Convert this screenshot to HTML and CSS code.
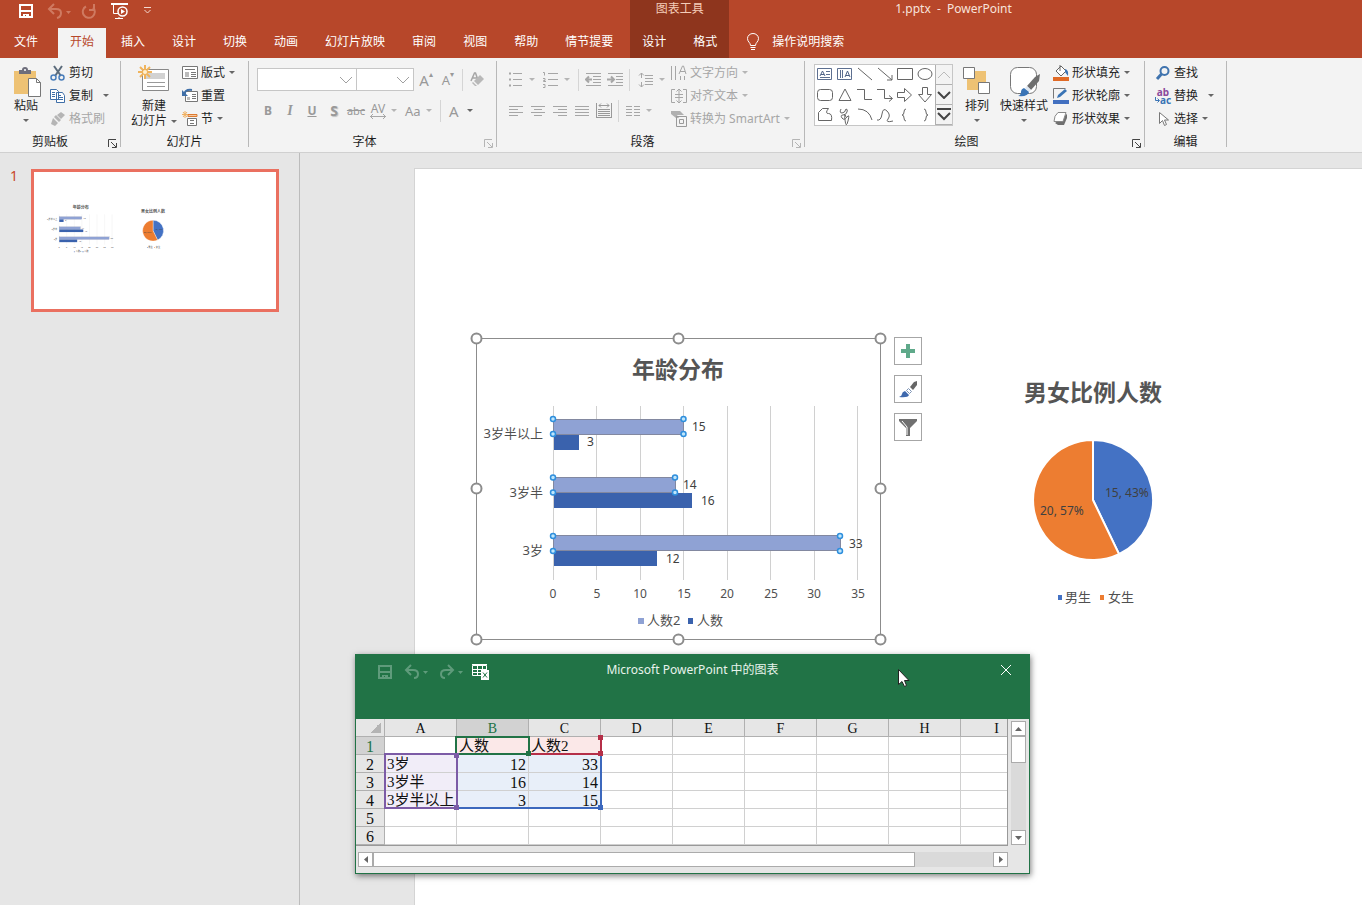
FILE: index.html
```html
<!DOCTYPE html>
<html lang="zh-CN">
<head>
  <meta charset="UTF-8">
  <meta name="viewport" content="width=device-width, initial-scale=1.0">
  <title>1.pptx - PowerPoint</title>
  <link rel="stylesheet" href="styles.css">
</head>
<body>

<!-- Title bar and tabs -->
<header class="header">
  <div class="header-block">
    <div class="title-row quick">
      <button aria-label="保存"><svg width="16" height="16" fill="none" stroke="#fff" stroke-width="2"><path d="M2 2h12v12H2zM3 8h10"/><path d="M5 11h6v3H8v-2H7v2H5z" fill="#fff" stroke="none"/></svg></button>
      <button class="quick-undo" aria-label="撤消"><svg width="24" height="16" fill="none" stroke="#cf7a61" stroke-width="2"><path d="M7 1L2 6l5 5M2 6h7q5 0 5 4t-4 5"/><path d="M19 8h5l-2.500 3z" fill="#cf7a61" stroke="none"/></svg></button>
      <button class="quick-redo" aria-label="恢复"><svg width="16" height="16" fill="none" stroke="#cf7a61" stroke-width="2"><path d="M5 3.500a6 6 0 1 0 7 1M8 7h5V1"/></svg></button>
      <button class="quick-show" aria-label="从头开始"><svg width="18" height="17" fill="none" stroke="#fff" stroke-width="1"><path d="M0 1h17" stroke-width="2"/><path d="M2.500 2v8.500H7M8 14v2M4 15.500h8"/><circle cx="11.500" cy="8.500" r="4.500" stroke-width="1.500"/><path d="M10 6l4 2.500-4 2.500z" fill="#fff" stroke="none"/></svg></button>
      <button class="quick-more" aria-label="自定义快速访问工具栏"><svg width="9" height="16" fill="none" stroke="#f3d9d1"><path d="M1 4.500h7M1.500 7l3 3 3-3"/></svg></button>
    </div>
    <nav class="tabs">
      <a class="tab tab-file" href="#">文件</a>
      <a class="tab active" href="#">开始</a>
      <a class="tab" href="#">插入</a>
      <a class="tab" href="#">设计</a>
      <a class="tab" href="#">切换</a>
      <a class="tab" href="#">动画</a>
      <a class="tab" href="#">幻灯片放映</a>
      <a class="tab" href="#">审阅</a>
      <a class="tab" href="#">视图</a>
      <a class="tab" href="#">帮助</a>
      <a class="tab" href="#">情节提要</a>
    </nav>
  </div>
  <div class="header-block context">
    <div class="title-row">图表工具</div>
    <nav class="tabs">
      <a class="tab" href="#">设计</a>
      <a class="tab" href="#">格式</a>
    </nav>
  </div>
  <div class="header-block search">
    <div class="title-row doc-title">1.pptx&nbsp; -&nbsp; PowerPoint</div>
    <button class="tell-me">
      <svg width="14" height="18" fill="none" stroke="#fff"><path d="M4.500 12.500c0-3-3-3.500-3-7a5.500 5 0 0 1 11 0c0 3.500-3 4-3 7zM4.500 14.500h5M5 16.500h4"/></svg>
      操作说明搜索
    </button>
  </div>
</header>

<!-- Ribbon -->
<div class="ribbon">
  <section class="group group-clipboard">
    <div class="group-body">
      <button class="big">
        <svg width="32" height="32"><path d="M4 5h22v23H4z" fill="#eec274"/><path d="M9 8V4h3q0-3 3-3t3 3h3v4z" fill="#6d6d7b"/><circle cx="15" cy="4" r="1" fill="#fff"/><path d="M18.500 12.500h8l4 4v14h-12z" fill="#fff" stroke="#777"/><path d="M26.500 12.500v4h4" fill="none" stroke="#777"/></svg>
        <span>粘贴</span><i class="caret"></i>
      </button>
      <div class="stack">
        <button class="cmd"><svg width="16" height="16" fill="none" stroke="#5b6b7b" stroke-width="2"><path d="M4 1l7 10M12 1L5 11"/><g stroke="#4a7ebb" stroke-width="1.500"><circle cx="3.500" cy="12.500" r="2.500"/><circle cx="11.500" cy="12.500" r="2.500"/></g></svg>剪切</button>
        <button class="cmd"><svg width="16" height="16" fill="#fff" stroke="#3f6fa8"><path d="M.500 1.500h6l2 2v8h-8zM6.500 4.500h6l2 3v7h-8z"/><path d="M2 4.500h3M2 6.500h3M2 8.500h3M8 7.500h3M8 9.500h5M8 11.500h5"/></svg>复制<i class="caret caret-far"></i></button>
        <button class="cmd off"><svg width="16" height="16" fill="#b5b5b5"><path d="M11 1l4 3-4 4-4-4zM6 4l5 5-2 2-5-5zM3 7l5 5-3 3-4-2z"/></svg>格式刷</button>
      </div>
    </div>
    <div class="group-name">剪贴板</div>
    <button class="launcher" aria-label="剪贴板选项"><svg width="9" height="9" fill="none" stroke="#444"><path d="M.500 8V.500H8M3 3l5 5M8.500 4v4.500H4"/></svg></button>
  </section>

  <section class="group group-slides">
    <div class="group-body">
      <button class="big">
        <svg width="32" height="32"><path d="M4.500 4.500h26v21h-26z" fill="#fff" stroke="#888"/><path d="M8 8h19v6H8z" fill="#d2d2d2"/><path d="M9 17.500h18M9 21.500h18" stroke="#999"/><path d="M7 0v14M0 7h14M2 2l10 10M12 2L2 12" stroke="#f0b45c" stroke-width="2"/><circle cx="7" cy="7" r="2" fill="#fff0d0"/></svg>
        <span>新建</span><span class="with-caret">幻灯片<i class="caret"></i></span>
      </button>
      <div class="stack">
        <button class="cmd"><svg width="16" height="16" fill="#fff" stroke="#777"><path d="M.500 1.500h15v12H.500z"/><path d="M3 4.500h10M9 7.500h5M9 9.500h5M9 11.500h5"/><path d="M3 7h4v5H3z" fill="#bbb" stroke="none"/></svg>版式<i class="caret"></i></button>
        <button class="cmd"><svg width="16" height="16" fill="#fff" stroke="#777"><path d="M3.500 3.500h12v10h-12z"/><path d="M10 6.500h4M10 8.500h4M10 10.500h4"/><path d="M5 9h3v3H5z" fill="#bbb" stroke="none"/><path d="M2 7q1-6 8-5" fill="none" stroke="#3f6fa8" stroke-width="2"/><path d="M0 2v6h6z" fill="#3f6fa8" stroke="none"/></svg>重置</button>
        <button class="cmd"><svg width="16" height="16" fill="#fff" stroke="#777"><path d="M5.500 7.500h9v7h-9zM8 9.500h4M8 12.500h4"/><path d="M6 3.500h9v2H6z" fill="#f6c9a0" stroke="#dd7b31"/><path d="M3 0v7M0 3.500h6M1 1l4 5M5 1L1 6" stroke="#f0b060"/></svg>节<i class="caret"></i></button>
      </div>
    </div>
    <div class="group-name">幻灯片</div>
  </section>

  <section class="group group-font">
    <div class="group-body rows">
      <div class="tools">
        <select class="combo combo-name" aria-label="字体"><option></option></select>
        <select class="combo combo-size" aria-label="字号"><option></option></select>
        <button class="tool big-a">A<sup>▴</sup></button>
        <button class="tool small-a">A<sup>▾</sup></button>
        <i class="sep"></i>
        <button class="tool" aria-label="清除格式"><svg width="16" height="16" fill="#b8b8b8"><path d="M2 9L5.500 1h1L9 8M3.500 6h5" fill="none" stroke="#a6a6a6" stroke-width="1.500"/><path d="M11 3l4 4-6 6-4-4z"/><path d="M4 10l4 4H6l-3-3z"/></svg></button>
      </div>
      <div class="tools">
        <button class="tool"><b>B</b></button>
        <button class="tool italic">I</button>
        <button class="tool under">U</button>
        <button class="tool shadow"><b>S</b></button>
        <button class="tool strike">abc</button>
        <button class="tool drop"><span class="spacing">AV<svg width="16" height="5" fill="none" stroke="#a6a6a6"><path d="M0 2.500h16M3 0L.500 2.500 3 5M13 0l2.500 2.500L13 5"/></svg></span><i class="caret"></i></button>
        <button class="tool drop case">Aa<i class="caret"></i></button>
        <i class="sep"></i>
        <button class="tool drop color">A<i class="caret dark"></i></button>
      </div>
    </div>
    <div class="group-name">字体</div>
    <button class="launcher off" aria-label="字体选项"><svg width="9" height="9" fill="none" stroke="#b5b5b5"><path d="M.500 8V.500H8M3 3l5 5M8.500 4v4.500H4"/></svg></button>
  </section>

  <section class="group group-paragraph">
    <div class="group-body">
      <div class="rows">
        <div class="tools">
          <button class="tool drop" aria-label="项目符号"><svg width="16" height="16" stroke="#a6a6a6"><path d="M5 1.500h9M5 7.500h9M5 13.500h9"/><path d="M1 1.500h2M1 7.500h2M1 13.500h2" stroke-width="2"/></svg><i class="caret"></i></button>
          <button class="tool drop" aria-label="编号"><svg width="16" height="16" fill="none" stroke="#a6a6a6"><path d="M5 1.500h10M5 7.500h10M5 13.500h10M0 .500h1.500v3M0 6.500h2v2H.500v1H3M0 12.500h2v3H0"/></svg><i class="caret"></i></button>
          <i class="sep"></i>
          <button class="tool" aria-label="降低列表级别"><svg width="16" height="16" fill="none" stroke="#a6a6a6"><path d="M1 1.500h15M8 4.500h8M8 7.500h8M8 10.500h8M1 13.500h15"/><path d="M1 7.500h6M4 4.500L1 7.500l3 3" stroke-width="2"/></svg></button>
          <button class="tool" aria-label="提高列表级别"><svg width="16" height="16" fill="none" stroke="#a6a6a6"><path d="M1 1.500h15M9 4.500h7M9 7.500h7M9 10.500h7M1 13.500h15"/><path d="M0 7.500h6M4 4.500l3 3-3 3" stroke-width="2"/></svg></button>
          <i class="sep"></i>
          <button class="tool drop line-spacing" aria-label="行距"><svg width="16" height="16" fill="none" stroke="#a6a6a6"><path d="M7 3.500h8M7 6.500h8M7 9.500h8M7 12.500h8M3.500 1v5M1 3.500L3.500 1 6 3.500M3.500 10v5M1 12.500L3.500 15 6 12.500"/></svg><i class="caret"></i></button>
        </div>
        <div class="tools">
          <button class="tool" aria-label="左对齐"><svg width="16" height="16" stroke="#a6a6a6"><path d="M1 3.500h14M1 6.500h9M1 9.500h14M1 12.500h9"/></svg></button>
          <button class="tool" aria-label="居中"><svg width="16" height="16" stroke="#a6a6a6"><path d="M1 3.500h14M4 6.500h8M1 9.500h14M4 12.500h8"/></svg></button>
          <button class="tool" aria-label="右对齐"><svg width="16" height="16" stroke="#a6a6a6"><path d="M1 3.500h14M6 6.500h9M1 9.500h14M6 12.500h9"/></svg></button>
          <button class="tool" aria-label="两端对齐"><svg width="16" height="16" stroke="#a6a6a6"><path d="M1 3.500h14M1 6.500h14M1 9.500h14M1 12.500h14"/></svg></button>
          <button class="tool" aria-label="分散对齐"><svg width="16" height="16" fill="none" stroke="#999"><path d="M.500 0v15M15.500 0v15M2 6.500h12M2 8.500h12M2 10.500h12M2 12.500h12M0 14.500h16M3 2.500h10M5 .500l-2 2 2 2M11 .500l2 2-2 2"/></svg></button>
          <i class="sep"></i>
          <button class="tool drop" aria-label="分栏"><svg width="16" height="16" stroke="#a6a6a6"><path d="M1 3.500h6M1 6.500h6M1 9.500h6M1 12.500h6M9 3.500h6M9 6.500h6M9 9.500h6M9 12.500h6"/></svg><i class="caret"></i></button>
        </div>
      </div>
      <div class="stack">
        <button class="cmd off"><svg width="16" height="16" fill="none" stroke="#a6a6a6"><path d="M.500 1v14M4.500 1v14M9.500 11v4M13.500 11v4M8 9l3.500-8h1L15 9M9 6.500h5"/></svg>文字方向<i class="caret"></i></button>
        <button class="cmd off"><svg width="16" height="16" fill="none" stroke="#a6a6a6"><path d="M4 1.500H.500v13H4M12 1.500h3.500v13H12M4 6.500h8M4 9.500h8M8 1v14M5.500 3.500L8 1l2.500 2.500M5.500 12.500L8 15l2.500-2.500"/></svg>对齐文本<i class="caret"></i></button>
        <button class="cmd off"><svg width="16" height="16" fill="none" stroke="#999"><path d="M0 0h9l4 4H6l2 3H5L0 3z" fill="#b0b0b0" stroke="none"/><path d="M5.500 5.500h10v10h-10zM8.500 8.500h4v4h-4z"/></svg>转换为 SmartArt<i class="caret"></i></button>
      </div>
    </div>
    <div class="group-name">段落</div>
    <button class="launcher off" aria-label="段落选项"><svg width="9" height="9" fill="none" stroke="#b5b5b5"><path d="M.500 8V.500H8M3 3l5 5M8.500 4v4.500H4"/></svg></button>
  </section>

  <section class="group group-drawing">
    <div class="group-body">
      <div class="gallery">
        <div class="shapes">
          <svg class="shape" viewBox="0 0 20 20"><path d="M2.500 3.500h14v11h-14zM11 6.500h4M11 9.500h4M5 12.500h10" stroke="#5d6f90"/><path d="M5 11l2.500-5L10 11M6 9.500h3" stroke="#4d6185"/></svg>
          <svg class="shape" viewBox="0 0 20 20"><path d="M2.500 3.500h14v11h-14zM5.500 5v8M7.500 5v8" stroke="#5d6f90"/><path d="M10 12l2.500-6L15 12M11 10.500h3" stroke="#4d6185"/></svg>
          <svg class="shape" viewBox="0 0 20 20"><path d="M3 3l14 12"/></svg>
          <svg class="shape" viewBox="0 0 20 20"><path d="M3 3l14 12M17 10v5h-5"/></svg>
          <svg class="shape" viewBox="0 0 20 20"><path d="M2.500 3.500h15v11h-15z"/></svg>
          <svg class="shape" viewBox="0 0 20 20"><ellipse cx="10" cy="9" rx="7" ry="5.500"/></svg>
          <svg class="shape" viewBox="0 0 20 20"><rect x="2.500" y="4.500" width="15" height="11" rx="3"/></svg>
          <svg class="shape" viewBox="0 0 20 20"><path d="M10 4l6 11.500H4z"/></svg>
          <svg class="shape" viewBox="0 0 20 20"><path d="M2 4.500h7.500v10H17"/></svg>
          <svg class="shape" viewBox="0 0 20 20"><path d="M2 4.500h7.500v9H17M14 10.500l3.500 3-3.500 3"/></svg>
          <svg class="shape" viewBox="0 0 20 20"><path d="M2.500 7.500h7v-4l7 6.500-7 6.500v-4h-7z"/></svg>
          <svg class="shape" viewBox="0 0 20 20"><path d="M7.500 2.500h5v7h4L10 17 3.500 9.500h4z"/></svg>
          <svg class="shape" viewBox="0 0 20 20"><path d="M3.500 15.500v-8l4-4h6q-4 5 0 5t3 7z"/></svg>
          <svg class="shape" viewBox="0 0 20 20"><path d="M6 4q-2 4 1 4t4-4q2 0 1 3t-4 3-1 3 5-1 1 4-3-1 1-3"/></svg>
          <svg class="shape" viewBox="0 0 20 20"><path d="M3 4q11 0 14 11"/></svg>
          <svg class="shape" viewBox="0 0 20 20"><path d="M2 15q4 1 5-6t5-3 1 8 5 2"/></svg>
          <svg class="shape" viewBox="0 0 20 20"><path d="M11 4q-2 0-2 3t-2 3q2 0 2 3t2 3"/></svg>
          <svg class="shape" viewBox="0 0 20 20"><path d="M9 4q2 0 2 3t2 3q-2 0-2 3t-2 3"/></svg>
        </div>
        <div class="scroller">
          <button aria-label="上一行"><svg width="14" height="8" fill="none" stroke="#bbb"><path d="M1 7l6-6 6 6"/></svg></button>
          <button aria-label="下一行"><svg width="14" height="8" fill="none" stroke="#444" stroke-width="2"><path d="M1 1l6 6 6-6"/></svg></button>
          <button aria-label="其他"><svg width="14" height="13" fill="none" stroke="#444" stroke-width="2"><path d="M0 1h14M1 5l6 6 6-6"/></svg></button>
        </div>
      </div>
      <button class="big">
        <svg width="32" height="32"><path d="M6 5h19v19H6z" fill="#eec274"/><path d="M2.500 1.500h11v11h-11zM17.500 16.500h11v11h-11z" fill="#fff" stroke="#777"/></svg>
        <span>排列</span><i class="caret"></i>
      </button>
      <button class="big">
        <svg width="32" height="32"><rect x="2.500" y="1.500" width="26" height="26" rx="7" fill="#fff" stroke="#777"/><path d="M32 8l-1 7-8 9-4-4 8-9z" fill="#6e6e6e"/><path d="M19 20l4 4-2 2-4-4z" fill="#dfe8f2"/><path d="M16 22l5 4q-1 5-11 4 3-1 3-4t3-4z" fill="#3a74b5"/></svg>
        <span>快速样式</span><i class="caret"></i>
      </button>
      <div class="stack">
        <button class="cmd"><svg width="16" height="16"><path d="M0 12h16v4H0z" fill="#e06a26"/><path d="M3 6l5-5 5 5-5 5z" fill="#fff" stroke="#666"/><path d="M7 0v6" stroke="#666"/><path d="M12 4q4 1 3 7l-3-4z" fill="#3a74b5"/></svg>形状填充<i class="caret"></i></button>
        <button class="cmd"><svg width="16" height="16"><path d="M0 12h16v4H0z" fill="#4270c0"/><path d="M.500 10.500v-10h12" fill="none" stroke="#777"/><path d="M4 10l1-3 7-6 2 2-7 6z" fill="#3a74b5"/></svg>形状轮廓<i class="caret"></i></button>
        <button class="cmd"><svg width="16" height="16"><path d="M2 12l3 2h6l3-7V3z" fill="#6f6f6f"/><path d="M5 1.500h8l-3 9H1q0-6 4-9z" fill="#fff" stroke="#888"/></svg>形状效果<i class="caret"></i></button>
      </div>
    </div>
    <div class="group-name">绘图</div>
    <button class="launcher" aria-label="绘图选项"><svg width="9" height="9" fill="none" stroke="#444"><path d="M.500 8V.500H8M3 3l5 5M8.500 4v4.500H4"/></svg></button>
  </section>

  <section class="group group-editing">
    <div class="group-body">
      <div class="stack">
        <button class="cmd"><svg width="16" height="16" fill="none" stroke="#3f73ae" stroke-width="2"><circle cx="9.500" cy="6" r="4"/><path d="M6.500 9L2 14" stroke-width="3"/></svg>查找</button>
        <button class="cmd"><span class="replace"><span class="replace-from">ab</span><span class="replace-to"><svg width="5" height="6" fill="none" stroke="#3a74b5"><path d="M.500 0v3.500H4M2.500 1.500l2 2-2 2"/></svg>ac</span></span>替换<i class="caret caret-far"></i></button>
        <button class="cmd"><svg width="16" height="16" fill="#fff" stroke="#777"><path d="M4.500 1.500v11l3-3 2 5 2-1-2-4.500h4z"/></svg>选择<i class="caret"></i></button>
      </div>
    </div>
    <div class="group-name">编辑</div>
  </section>
</div>

<main class="main">
  <!-- Slide list -->
  <aside class="slides">
    <span class="slide-number">1</span>
    <a class="thumb" href="#slide" aria-label="幻灯片 1">
      <svg viewBox="-6 -6 1390 787" class="chart">
        <use href="#age-chart"/>
        <use href="#gender-chart"/>
      </svg>
    </a>
  </aside>

  <div class="workspace">
    <div class="slide" id="slide">
      <svg class="chart age" viewBox="55 163 418 314" width="418" height="314">
        <g id="age-chart">
          <text class="chart-title" x="263" y="209">年龄分布</text>
          <path class="gridlines" d="M138.500 237v174M181.500 237v174M225.500 237v174M268.500 237v174M312.500 237v174M355.500 237v174M399.500 237v174M442.500 237v174"/>
          <g class="bars2">
            <rect x="138.500" y="250.500" width="130" height="15"/>
            <rect x="138.500" y="308.500" width="122" height="15"/>
            <rect x="138.500" y="366.500" width="287" height="15"/>
          </g>
          <g class="bars1">
            <rect x="139" y="266" width="25" height="15"/>
            <rect x="139" y="324" width="138" height="15"/>
            <rect x="139" y="382" width="103" height="15"/>
          </g>
          <g class="values">
            <text x="277" y="262">15</text>
            <text x="172" y="277">3</text>
            <text x="268" y="320">14</text>
            <text x="286" y="336">16</text>
            <text x="434" y="379">33</text>
            <text x="251" y="394">12</text>
          </g>
          <g class="categories">
            <text x="128" y="269">3岁半以上</text>
            <text x="128" y="328">3岁半</text>
            <text x="128" y="386">3岁</text>
          </g>
          <g class="axis">
            <text x="138" y="429">0</text>
            <text x="182" y="429">5</text>
            <text x="225" y="429">10</text>
            <text x="269" y="429">15</text>
            <text x="312" y="429">20</text>
            <text x="356" y="429">25</text>
            <text x="399" y="429">30</text>
            <text x="443" y="429">35</text>
          </g>
          <path d="M223 449h6v6h-6z" fill="#8fa2d4"/>
          <text class="legend" x="232" y="456">人数2</text>
          <path d="M273 449h5v6h-5z" fill="#3a62ad"/>
          <text class="legend" x="282" y="456">人数</text>
        </g>
        <rect class="frame" x="61.500" y="169.500" width="404" height="301"/>
        <g class="frame-handles">
          <circle cx="61.500" cy="169.500" r="5"/><circle cx="263.500" cy="169.500" r="5"/><circle cx="465.500" cy="169.500" r="5"/>
          <circle cx="61.500" cy="319.500" r="5"/><circle cx="465.500" cy="319.500" r="5"/>
          <circle cx="61.500" cy="470.500" r="5"/><circle cx="263.500" cy="470.500" r="5"/><circle cx="465.500" cy="470.500" r="5"/>
        </g>
        <g class="bar-handles">
          <circle cx="138" cy="250" r="2.500"/><circle cx="138" cy="265" r="2.500"/><circle cx="268.500" cy="250" r="2.500"/><circle cx="268.500" cy="265" r="2.500"/>
          <circle cx="138" cy="308.500" r="2.500"/><circle cx="138" cy="323.500" r="2.500"/><circle cx="260" cy="308.500" r="2.500"/><circle cx="260" cy="323.500" r="2.500"/>
          <circle cx="138" cy="367" r="2.500"/><circle cx="138" cy="382" r="2.500"/><circle cx="425" cy="367" r="2.500"/><circle cx="425" cy="382" r="2.500"/>
        </g>
      </svg>

      <div class="chart-buttons">
        <button aria-label="图表元素"><svg width="16" height="16" stroke="#5fa98a" stroke-width="4"><path d="M8 1v14M1 8h14"/></svg></button>
        <button aria-label="图表样式"><svg width="20" height="20"><path d="M19 2v4l-4 5-3-3 4-5z" fill="#666"/><path d="M10.500 9.500l3 3-2 2-3-3z" fill="#fff" stroke="#7d93b5"/><path d="M7 12l4 4q-1 3-10 2 3-1 3-3t3-3z" fill="#3f69ad"/></svg></button>
        <button aria-label="图表筛选器"><svg width="20" height="20" fill="#707070"><path d="M1 2h18v2l-7 7v8H8v-8L1 4z"/><path d="M4 4l5 6v8" fill="none" stroke="#fff"/></svg></button>
      </div>

      <svg class="chart gender" viewBox="600 200 160 245" width="160" height="245">
        <g id="gender-chart">
          <text class="chart-title" x="678" y="232">男女比例人数</text>
          <g stroke="#fff" stroke-width="2">
            <path d="M678 331V271A60 60 0 0 1 704 385.100Z" fill="#4472c4"/>
            <path d="M678 331L704 385.100A60 60 0 1 1 678 271Z" fill="#ed7d31"/>
          </g>
          <text class="slice" x="690" y="328">15, 43%</text>
          <text class="slice" x="625" y="346">20, 57%</text>
          <path d="M643 426h4v5h-4z" fill="#4472c4"/>
          <text class="legend" x="650" y="433">男生</text>
          <path d="M685 426h4v5h-4z" fill="#ed7d31"/>
          <text class="legend" x="693" y="433">女生</text>
        </g>
      </svg>
    </div>
  </div>
</main>

<!-- Chart data window -->
<div class="data-window">
  <div class="data-title">
    <div class="data-quick">
      <button aria-label="保存"><svg width="16" height="16" fill="none" stroke="#5f9b7b" stroke-width="2"><path d="M2 2h12v12H2zM3 8h10"/><path d="M5 11h6v3H8v-2H7v2H5z" fill="#5f9b7b" stroke="none"/></svg></button>
      <button aria-label="撤消"><svg width="26" height="16" fill="none" stroke="#5f9b7b" stroke-width="2"><path d="M9 1L4 6l5 5M4 6h7q5 0 5 4t-4 4"/><path d="M21 7h5l-2.500 3z" fill="#5f9b7b" stroke="none"/></svg></button>
      <button aria-label="恢复"><svg width="26" height="16" fill="none" stroke="#5f9b7b" stroke-width="2"><path d="M11 1l5 5-5 5M16 6H9q-5 0-5 4t4 4"/><path d="M21 7h5l-2.500 3z" fill="#5f9b7b" stroke="none"/></svg></button>
      <button aria-label="在 Excel 中编辑数据"><svg width="17" height="16" fill="none" stroke="#fff"><path d="M.500 1.500h14v10H.500zM0 .500h15M0 5.500h15M0 8.500h15M5.500 2v9M10.500 2v9"/><path d="M9 6h8v10H9z" fill="#fff" stroke="none"/><path d="M11 8.500l4 5M15 8.500l-4 5" stroke="#217346"/></svg></button>
    </div>
    <span>Microsoft PowerPoint 中的图表</span>
    <button class="close" aria-label="关闭"><svg width="12" height="12" stroke="#fff"><path d="M1 1l10 10M11 1L1 11"/></svg></button>
  </div>
  <div class="data-body">
    <div class="sheet">
      <table>
        <thead>
          <tr><th class="corner"></th><th>A</th><th class="on">B</th><th>C</th><th>D</th><th>E</th><th>F</th><th>G</th><th>H</th><th>I</th></tr>
        </thead>
        <tbody>
          <tr><th class="on">1</th><td></td><td class="name">人数</td><td class="name">人数2</td><td></td><td></td><td></td><td></td><td></td><td></td></tr>
          <tr><th>2</th><td class="cat">3岁</td><td class="num">12</td><td class="num">33</td><td></td><td></td><td></td><td></td><td></td><td></td></tr>
          <tr><th>3</th><td class="cat">3岁半</td><td class="num">16</td><td class="num">14</td><td></td><td></td><td></td><td></td><td></td><td></td></tr>
          <tr><th>4</th><td class="cat">3岁半以上</td><td class="num">3</td><td class="num">15</td><td></td><td></td><td></td><td></td><td></td><td></td></tr>
          <tr><th>5</th><td></td><td></td><td></td><td></td><td></td><td></td><td></td><td></td><td></td></tr>
          <tr><th>6</th><td></td><td></td><td></td><td></td><td></td><td></td><td></td><td></td><td></td></tr>
        </tbody>
      </table>
      <i class="range range-values"></i>
      <i class="range range-names"></i>
      <i class="range range-active"></i>
      <i class="range range-cats"></i>
    </div>
    <div class="vscroll">
      <button aria-label="向上滚动"><svg width="7" height="4" fill="#666"><path d="M0 4l3.500-4L7 4z"/></svg></button>
      <i class="vthumb"></i>
      <button aria-label="向下滚动"><svg width="7" height="4" fill="#666"><path d="M0 0h7L3.500 4z"/></svg></button>
    </div>
  </div>
  <div class="hscroll">
    <button aria-label="向左滚动"><svg width="4" height="7" fill="#666"><path d="M4 0v7L0 3.500z"/></svg></button>
    <i class="hthumb"></i>
    <button aria-label="向右滚动"><svg width="4" height="7" fill="#666"><path d="M0 0v7l4-3.500z"/></svg></button>
  </div>
  <svg class="pointer" width="13" height="20" fill="#fff" stroke="#222"><path d="M1.500 1.500v15l3.500-3 2.500 5 2-1-2-5h4.500z"/></svg>
</div>

</body>
</html>
```
FILE: styles.css
```css
* {
    box-sizing: border-box;
}

body {
    margin: 0;
    height: 100vh;
    display: flex;
    flex-direction: column;
    overflow: hidden;
    position: relative;
    background: #e6e6e6;
    color: #1e1e1e;
    font-family: "Noto Sans", "Noto Sans CJK SC", sans-serif;
    font-size: 12px;
    line-height: 16px;
}

button {
    margin: 0;
    padding: 0;
    border: 0;
    background: none;
    color: inherit;
    font: inherit;
}

a {
    color: inherit;
    text-decoration: none;
}

svg {
    display: block;
    flex: none;
}

/* Title bar */

.header {
    display: flex;
    flex: none;
    background: #b7472a;
    color: #fff;
}

.header-block {
    display: flex;
    flex-direction: column;
    white-space: nowrap;
}

.title-row {
    display: flex;
    align-items: flex-start;
    height: 28px;
    line-height: 18px;
}

.quick {
    padding: 3px 0 0 18px;
}

.quick-undo {
    margin-left: 13px;
}

.quick-redo {
    margin-left: 10px;
}

.quick-show,
.quick-more {
    margin-left: 14px;
}

.tabs {
    display: flex;
    gap: 3px;
}

.tab {
    padding: 0 12px;
    height: 30px;
    line-height: 28px;
}

.tab-file {
    padding: 0 17px 0 14px;
}

.tab.active {
    background: #f3f3f3;
    color: #b7472a;
}

.context {
    margin-left: 5px;
    background: #8e351d;
}

.context .title-row {
    justify-content: center;
    color: #f5cdb9;
}

.search {
    flex: 1;
}

.doc-title {
    padding-left: 166px;
    color: #f8e3dc;
}

.tell-me {
    display: flex;
    align-items: center;
    gap: 12px;
    height: 28px;
    padding-left: 17px;
}

/* Ribbon */

.ribbon {
    display: flex;
    flex: none;
    height: 95px;
    padding: 3px 0 0;
    background: #f3f3f3;
    border-bottom: 1px solid #d0d0d0;
}

.group {
    position: relative;
    flex: none;
    height: 86px;
    border-right: 1px solid #b8b8b8;
}

.group-clipboard { width: 121px; }
.group-slides { width: 128px; }
.group-font { width: 248px; }
.group-paragraph { width: 308px; }
.group-drawing { width: 340px; }
.group-editing { width: 82px; }

.group-body {
    display: flex;
    height: 70px;
}

.group-name {
    height: 20px;
    line-height: 22px;
    padding-right: 20px;
    text-align: center;
}

.group-slides .group-name,
.group-editing .group-name {
    padding-right: 0;
}

.group-paragraph .group-name,
.group-font .group-name,
.group-drawing .group-name {
    padding-right: 16px;
}

.launcher {
    position: absolute;
    right: 3px;
    bottom: -1px;
}

.big {
    display: flex;
    flex-direction: column;
    align-items: center;
    padding-top: 5px;
}

.big > .caret {
    margin-top: 5px;
}

.group-clipboard .big {
    width: 50px;
    padding-left: 2px;
}

.group-slides .big {
    width: 61px;
    padding-left: 5px;
}

.group-slides .big svg {
    margin-top: -1px;
    margin-bottom: 1px;
}

.with-caret {
    display: flex;
    align-items: center;
    gap: 4px;
    height: 14px;
}

.caret {
    width: 0;
    height: 0;
    border: 3px solid transparent;
    border-top-color: #666;
    border-bottom: 0;
}

.stack {
    display: flex;
    flex-direction: column;
}

.cmd {
    display: flex;
    align-items: center;
    gap: 3px;
    height: 23px;
    white-space: nowrap;
}

.cmd .caret {
    margin-left: 1px;
}

.cmd .caret-far {
    margin-left: 7px;
}

.off {
    color: #a6a6a6;
}

.off .caret,
.tool .caret {
    border-top-color: #b5b5b5;
}

.tool .dark {
    border-top-color: #666;
}

.rows {
    display: flex;
    flex-direction: column;
    gap: 8px;
    padding: 7px 0 0 8px;
}

.tools {
    display: flex;
    align-items: center;
    height: 23px;
}

.tool {
    display: flex;
    align-items: center;
    justify-content: center;
    width: 22px;
    height: 23px;
    color: #999;
    white-space: nowrap;
}

.drop {
    width: 35px;
    justify-content: flex-start;
    gap: 5px;
    padding-left: 3px;
}

.line-spacing {
    padding-left: 5px;
}

.sep {
    width: 1px;
    height: 22px;
    margin: 0 3px;
    background: #d5d5d5;
}

.combo {
    appearance: none;
    height: 23px;
    border: 1px solid #c6c6c6;
    border-radius: 0;
    background: #fff url("data:image/svg+xml,%3Csvg xmlns='http://www.w3.org/2000/svg' width='14' height='8' fill='none' stroke='%23a0a0a0'%3E%3Cpath d='M1 1l6 6 6-6'/%3E%3C/svg%3E") no-repeat right 3px center;
}

.combo-name {
    width: 100px;
}

.combo-size {
    width: 58px;
    margin: 0 1px 0 -1px;
}

.big-a {
    font-size: 15px;
}

.small-a {
    font-size: 13px;
}

.tool sup {
    align-self: flex-start;
    font-size: 8px;
    line-height: 12px;
}

.italic {
    font-family: "Liberation Serif", serif;
    font-size: 14px;
    font-style: italic;
    font-weight: bold;
}

.under {
    font-weight: bold;
    text-decoration: underline;
}

.shadow {
    font-size: 14px;
    text-shadow: 1px 1px 1px #c0c0c0;
}

.strike {
    font-size: 11px;
    text-decoration: line-through;
}

.spacing {
    line-height: 11px;
}

.case {
    font-size: 13px;
}

.color {
    padding-left: 5px;
    gap: 8px;
    font-size: 15px;
}

.group-paragraph .rows {
    width: 174px;
}

.gallery {
    display: flex;
    align-self: flex-start;
    height: 62px;
    margin: 3px 6px 0 9px;
    border: 1px solid #c6c6c6;
    background: #fff;
}

.shapes {
    display: grid;
    grid-template-columns: repeat(6, 20px);
    grid-auto-rows: 20px;
}

.shape {
    width: 20px;
    height: 20px;
    fill: none;
    stroke: #666;
}

.scroller {
    display: grid;
    grid-template-rows: repeat(3, 20px);
    width: 17px;
    background: #f3f3f3;
}

.scroller button {
    display: flex;
    align-items: center;
    justify-content: center;
    border-left: 1px solid #b0b0b0;
    border-bottom: 1px solid #b0b0b0;
}

.group-drawing .big {
    width: 36px;
}

.group-drawing .big + .big {
    width: 58px;
}

.group-editing .stack {
    padding-left: 10px;
}

.replace {
    display: flex;
    flex-direction: column;
    width: 16px;
    font-size: 10px;
    font-weight: bold;
    line-height: 8px;
}

.replace-from {
    color: #8b4a9c;
}

.replace-to {
    display: flex;
    align-items: center;
    color: #3a74b5;
}

/* Slide list and workspace */

.main {
    display: flex;
    flex: 1;
    min-height: 0;
}

.slides {
    display: flex;
    align-items: flex-start;
    flex: none;
    width: 300px;
    padding: 16px 0 0 10px;
    border-right: 1px solid #bcbcbc;
}

.slide-number {
    width: 21px;
    font-size: 14px;
    line-height: 14px;
    color: #c8452b;
}

.thumb {
    width: 248px;
    border: 3px solid #ea7060;
    background: #fff;
}

.workspace {
    display: flex;
    flex: 1;
    min-width: 0;
    padding: 16px 0 0 115px;
}

.slide {
    position: relative;
    flex: 1;
    background: #fff;
    box-shadow: 0 0 0 1px #d4d4d4;
}

/* Charts */

.age {
    position: absolute;
    left: 55px;
    top: 163px;
}

.gender {
    position: absolute;
    left: 600px;
    top: 200px;
}

.chart text {
    fill: #505050;
    font-size: 12px;
}

.chart .chart-title {
    fill: #555;
    font-size: 23px;
    font-weight: bold;
    text-anchor: middle;
}

.chart .values text,
.chart .slice {
    fill: #404040;
}

.chart .categories text {
    font-size: 13px;
    text-anchor: end;
}

.chart .axis text {
    text-anchor: middle;
}

.chart .legend {
    font-size: 13px;
}

.gridlines {
    fill: none;
    stroke: #d0d0d0;
}

.bars2 {
    fill: #8fa2d4;
    stroke: #8288a0;
}

.bars1 {
    fill: #3a62ad;
}

.frame {
    fill: none;
    stroke: #8c8c8c;
}

.frame-handles {
    fill: #fff;
    stroke: #8c8c8c;
    stroke-width: 2;
}

.bar-handles {
    fill: #bfe6fb;
    stroke: #2f8fdd;
    stroke-width: 1.5;
}

.chart-buttons {
    position: absolute;
    left: 479px;
    top: 168px;
    display: flex;
    flex-direction: column;
    gap: 10px;
}

.chart-buttons button {
    display: flex;
    align-items: center;
    justify-content: center;
    width: 28px;
    height: 28px;
    border: 1px solid #a6a6a6;
    background: #fff;
}

/* Chart data window */

.data-window {
    position: absolute;
    left: 355px;
    top: 654px;
    width: 675px;
    border: 1px solid #217346;
    background: #e6e6e6;
    box-shadow: 1px 2px 6px rgba(0, 0, 0, 0.5);
}

.data-title {
    display: grid;
    grid-template-columns: 1fr auto 1fr;
    align-items: start;
    height: 64px;
    background: #217346;
    color: #e8f3ec;
    line-height: 30px;
}

.data-quick {
    display: flex;
    gap: 9px;
    padding: 9px 0 0 21px;
}

.close {
    justify-self: end;
    padding: 9px 17px 0 0;
}

.data-body {
    display: flex;
}

.sheet {
    position: relative;
    flex: 1;
    min-width: 0;
    height: 127px;
    overflow: hidden;
    border-right: 1px solid #999;
    border-bottom: 1px solid #999;
    font-family: "Liberation Serif", "Noto Sans CJK SC", serif;
    font-size: 15px;
    line-height: 15px;
    color: #111;
}

table {
    width: 677px;
    table-layout: fixed;
    border-collapse: separate;
    border-spacing: 0;
}

th,
td {
    height: 18px;
    padding: 2px 2px 0;
    border-right: 1px solid #d0d0d0;
    border-bottom: 1px solid #d0d0d0;
    background: #fff;
    text-align: left;
    white-space: nowrap;
}

th {
    background: #e6e6e6;
    border-color: #b0b0b0;
    font-size: 16px;
    font-weight: normal;
    text-align: center;
}

thead th {
    font-size: 14px;
}

.corner {
    width: 29px;
    background: linear-gradient(135deg, transparent 50%, #b4b4b4 50%) no-repeat right 3px bottom 3px / 11px 11px #e6e6e6;
}

th.on {
    background: #d2d2d2;
    color: #217346;
}

td.name {
    background: #fbe8e8;
}

td.cat {
    background: #f1edf8;
}

td.num {
    background: #e8eff9;
    font-size: 16px;
    text-align: right;
}

/* Coloured outlines around the chart's source cells */

.range {
    position: absolute;
    border: 0 solid;
}

.range::before,
.range::after {
    content: "";
    position: absolute;
    right: -3px;
    width: 5px;
    height: 5px;
    background: currentColor;
}

.range::before {
    top: -2px;
}

.range::after {
    bottom: -3px;
}

.range-values {
    left: 101px;
    top: 36px;
    width: 145px;
    height: 54px;
    border-width: 0 2px 2px 0;
    color: #3c68bd;
}

.range-values::before,
.range-active::before {
    display: none;
}

.range-names {
    left: 173px;
    top: 18px;
    width: 73px;
    height: 18px;
    border-width: 0 2px 2px 0;
    color: #b52f48;
}

.range-active {
    left: 99px;
    top: 17px;
    width: 75px;
    height: 19px;
    border-width: 2px;
    color: #217346;
}

.range-cats {
    left: 28px;
    top: 34px;
    width: 74px;
    height: 56px;
    border-width: 2px;
    color: #7c5ba6;
}

.vscroll {
    display: flex;
    flex-direction: column;
    justify-content: space-between;
    flex: none;
    width: 15px;
    margin: 2px 3px 1px;
    background: #dadada;
}

.vscroll button,
.hscroll button {
    display: flex;
    align-items: center;
    justify-content: center;
    flex: none;
    width: 15px;
    height: 15px;
    border: 1px solid #ababab;
    background: #fff;
}

.vthumb {
    height: 27px;
    margin-bottom: auto;
    border: 1px solid #ababab;
    background: #fff;
}

.hscroll {
    display: flex;
    margin: 6px 21px 6px 2px;
    background: #dadada;
}

.hthumb {
    width: 542px;
    margin-right: auto;
    border: 1px solid #ababab;
    background: #fff;
}

.pointer {
    position: absolute;
    left: 541px;
    top: 13px;
}
```
